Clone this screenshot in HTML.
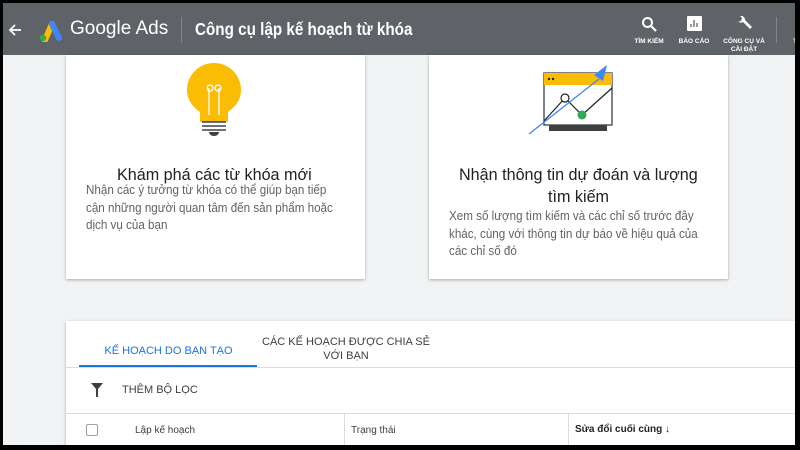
<!DOCTYPE html>
<html><head><meta charset="utf-8"><style>
*{margin:0;padding:0;box-sizing:border-box}
body{width:800px;height:450px;overflow:hidden;background:#000;font-family:"Liberation Sans",Arial,sans-serif;position:relative}
.scr{position:absolute;left:3px;top:3px;width:792px;height:442px;background:#f1f3f4;overflow:hidden}
.hdr{position:absolute;left:0;top:0;width:794px;height:52px;background:#5f6368;color:#fff}
.card{position:absolute;background:#fff;box-shadow:0 1px 3px rgba(0,0,0,.3)}
.t{position:absolute;color:#202124;font-size:17px;white-space:nowrap;transform:scaleX(.95);transform-origin:0 0;line-height:22px}
.d{position:absolute;color:#5f6368;font-size:12.5px;line-height:17.5px;white-space:nowrap;transform:scaleX(.93);transform-origin:0 0}
.ic{position:absolute;font-size:6.5px;font-weight:bold;text-align:center;line-height:8px}
</style></head><body><div class="scr">
<div class="hdr">
<svg style="position:absolute;left:5px;top:20px" width="14" height="14" viewBox="0 0 14 14"><path d="M13 7H2M7 2L2 7l5 5" stroke="#fff" stroke-width="1.8" fill="none"/></svg>
<svg style="position:absolute;left:34px;top:17px" width="26" height="22" viewBox="0 0 26 22"><path d="M8 20L15 4" stroke="#fbbc04" stroke-width="6" stroke-linecap="round"/><path d="M15 4L22 18" stroke="#4285f4" stroke-width="6" stroke-linecap="round"/><circle cx="6" cy="18" r="3.2" fill="#34a853"/></svg>
<div style="position:absolute;left:67px;top:15px;font-size:19px;color:#fff">Google Ads</div>
<div style="position:absolute;left:178px;top:14px;width:1px;height:26px;background:#80868b"></div>
<div style="position:absolute;left:192px;top:16px;font-size:17.5px;font-weight:bold;color:#fff;white-space:nowrap;transform:scaleX(.87);transform-origin:0 0">Công cụ lập kế hoạch từ khóa</div>
<svg style="position:absolute;left:638px;top:13px" width="16" height="16" viewBox="0 0 16 16"><circle cx="6.5" cy="6.5" r="4.5" stroke="#fff" stroke-width="2" fill="none"/><path d="M10 10l5 5" stroke="#fff" stroke-width="2.2"/></svg>
<div class="ic" style="left:626px;top:35px;width:40px">TÌM KIẾM</div>
<svg style="position:absolute;left:684px;top:13px" width="15" height="15" viewBox="0 0 15 15"><rect width="15" height="15" rx="1" fill="#fff"/><path d="M4 11V8M7 11V4M10 11V7" stroke="#5f6368" stroke-width="1.3"/></svg>
<div class="ic" style="left:670px;top:35px;width:42px">BÁO CÁO</div>
<svg style="position:absolute;left:732px;top:11px" width="18" height="18" viewBox="0 0 18 18"><path d="M2 6a4 4 0 0 0 6 2l7 7 2-2-7-7a4 4 0 0 0-5-4l2 2-1 3-3 1z" fill="#fff"/></svg>
<div class="ic" style="left:716px;top:35px;width:50px">CÔNG CỤ VÀ<br>CÀI ĐẶT</div>
<div style="position:absolute;left:773px;top:14px;width:1px;height:26px;background:#80868b"></div>
<div class="ic" style="left:787px;top:35px;width:10px">T</div>
</div>
<div class="card" style="left:63px;top:52px;width:299px;height:224px">
<svg style="position:absolute;left:120px;top:5px" width="56" height="78" viewBox="0 0 56 78"><path d="M28 3a27 27 0 0 0-27 27c0 10 6 17 13 22v10h28V52c7-5 13-12 13-22A27 27 0 0 0 28 3z" fill="#fbbc04"/><path d="M23 55V28M33 55V28" stroke="#fff" stroke-width="1.3"/><circle cx="24" cy="28" r="3" stroke="#fff" fill="none" stroke-width="1.3"/><circle cx="32" cy="28" r="3" stroke="#fff" fill="none" stroke-width="1.3"/><rect x="16" y="62" width="24" height="10" fill="#fff"/><path d="M16 62h24M16 66h24M16 70h24" stroke="#3c4043" stroke-width="1.5"/><path d="M23 72a5 4 0 0 0 10 0" fill="#3c4043"/></svg>
<div class="t" style="left:51px;top:109px">Khám phá các từ khóa mới</div>
<div class="d" style="left:20px;top:127px">Nhận các ý tưởng từ khóa có thể giúp bạn tiếp<br>cận những người quan tâm đến sản phẩm hoặc<br>dịch vụ của bạn</div>
</div>
<div class="card" style="left:426px;top:52px;width:299px;height:224px">
<svg style="position:absolute;left:95px;top:8px" width="120" height="72" viewBox="0 0 120 72"><rect x="20" y="10" width="68" height="52" fill="#fff" stroke="#3c4043" stroke-width="1.3"/><rect x="20" y="10" width="68" height="12" fill="#fbbc04"/><circle cx="25" cy="16" r="1.2" fill="#202124"/><circle cx="29" cy="16" r="1.2" fill="#202124"/><rect x="25" y="62" width="58" height="6" fill="#3c4043"/><path d="M20 58l21-23 17 17 30-27" stroke="#202124" stroke-width="1.2" fill="none"/><path d="M5 71l70-55" stroke="#4285f4" stroke-width="1.3"/><path d="M83 2L70 12l9 6z" fill="#4285f4"/><circle cx="41" cy="35" r="4" fill="#fff" stroke="#202124" stroke-width="1.2"/><circle cx="58" cy="52" r="4.5" fill="#34a853"/></svg>
<div class="t" style="left:30px;top:109px">Nhận thông tin dự đoán và lượng</div>
<div class="t" style="left:119px;top:131px">tìm kiếm</div>
<div class="d" style="left:20px;top:153px">Xem số lượng tìm kiếm và các chỉ số trước đây<br>khác, cùng với thông tin dự báo về hiệu quả của<br>các chỉ số đó</div>
</div>
<div class="card" style="left:63px;top:318px;width:740px;height:130px">
<div style="position:absolute;left:14px;top:24px;width:177px;text-align:center;color:#1a73e8;font-size:11px">KẾ HOẠCH DO BẠN TẠO</div>
<div style="position:absolute;left:13px;top:44px;width:178px;height:2px;background:#1a73e8"></div>
<div style="position:absolute;left:195px;top:14px;width:170px;text-align:center;color:#3c4043;font-size:11px;line-height:14px">CÁC KẾ HOẠCH ĐƯỢC CHIA SẺ<br>VỚI BẠN</div>
<div style="position:absolute;left:0;top:46px;width:740px;height:1px;background:#dadce0"></div>
<svg style="position:absolute;left:25px;top:62px" width="12" height="14" viewBox="0 0 12 14"><path d="M0 0h12L7 6v8H5V6z" fill="#3c4043"/></svg>
<div style="position:absolute;left:56px;top:63px;color:#3c4043;font-size:11px">THÊM BỘ LỌC</div>
<div style="position:absolute;left:0;top:92px;width:740px;height:1px;background:#dadce0"></div>
<div style="position:absolute;left:20px;top:103px;width:12px;height:12px;border:1.5px solid #9aa0a6;border-radius:2px"></div>
<div style="position:absolute;left:69px;top:104px;color:#3c4043;font-size:10px">Lập kế hoạch</div>
<div style="position:absolute;left:278px;top:93px;width:1px;height:40px;background:#dadce0"></div>
<div style="position:absolute;left:285px;top:104px;color:#3c4043;font-size:10px">Trạng thái</div>
<div style="position:absolute;left:502px;top:93px;width:1px;height:40px;background:#dadce0"></div>
<div style="position:absolute;left:509px;top:103px;color:#202124;font-size:10px;font-weight:bold">Sửa đổi cuối cùng ↓</div>
<div style="position:absolute;left:0;top:126px;width:740px;height:2px;background:#80868b"></div>
</div>
</div></body></html>
